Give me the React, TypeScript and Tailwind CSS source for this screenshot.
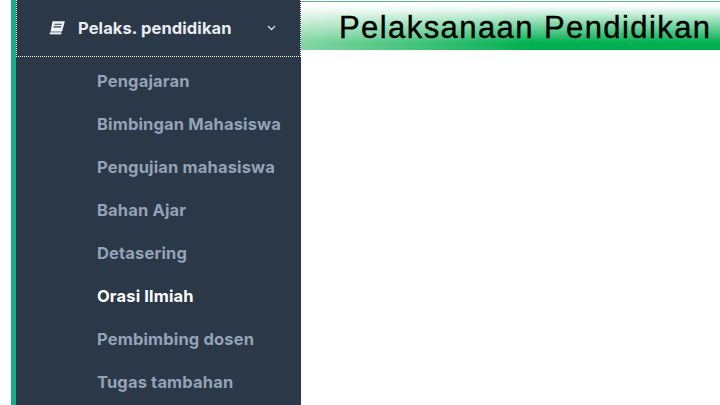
import React from 'react';

const items = [
  'Pengajaran',
  'Bimbingan Mahasiswa',
  'Pengujian mahasiswa',
  'Bahan Ajar',
  'Detasering',
  'Orasi Ilmiah',
  'Pembimbing dosen',
  'Tugas tambahan',
];

const App: React.FC = () => {
  return (
    <div className="flex h-[405px] w-[720px] overflow-hidden bg-white font-['Inter',sans-serif]">
      <div className="ml-[11px] h-full w-[5px] shrink-0 bg-[#1fa98a]" />
      <div className="h-full w-[285px] shrink-0 bg-[#2a3848]">
        <div className="flex h-[57px] items-center border-b border-r border-l border-dotted border-white pl-[31px] pr-[24px]">
          <svg className="h-[16px] w-[18px] shrink-0" viewBox="0 0 16 14" fill="none">
            <path d="M4 1h11l-2.6 9.5H2.2z" fill="#eef1f4" />
            <path d="M2.2 10.5h10.2l-.5 2.5H2.4c-1.4 0-1.6-1.7-.2-2.5z" fill="#eef1f4" stroke="#2a3848" strokeWidth="0.6" />
            <path d="M5.6 3.6h6.6M5 6h6.6" stroke="#2a3848" strokeWidth="0.9" />
          </svg>
          <span className="ml-[12px] text-[16.5px] leading-none font-bold tracking-[0.1px] whitespace-nowrap text-[#e9edf1]">Pelaks. pendidikan</span>
          <svg className="ml-auto h-[6px] w-[9px]" viewBox="0 0 9 6" fill="none">
            <path d="M1 1l3.5 3.5L8 1" stroke="#d5dae0" strokeWidth="1.3" />
          </svg>
        </div>
        <ul className="flex flex-col gap-[21px] pt-[13px] pl-[81px]">
          {items.map((item) => (
            <li
              key={item}
              className={
                item === 'Orasi Ilmiah'
                  ? 'text-[16.5px] leading-[22px] font-bold tracking-[0.15px] text-white'
                  : 'text-[16.5px] leading-[22px] font-bold tracking-[0.15px] text-[#95a2b7]'
              }
            >
              {item}
            </li>
          ))}
        </ul>
      </div>
      <div className="flex-1">
        <div className="mt-px h-px bg-[#5fb88c]" />
        <div className="relative h-[48px] bg-[linear-gradient(90deg,#84d6a4_0%,#00b050_55%,#00b050_100%)]">
          <div className="absolute inset-0 bg-[linear-gradient(180deg,#ffffff_0%,#ffffff_8%,rgba(255,255,255,0)_85%)]" />
          <h1 className="relative pl-[38px] font-['Liberation_Sans',sans-serif] text-[31px] leading-[52px] tracking-[1.42px] whitespace-nowrap text-black [-webkit-text-stroke:0.4px_#000]">
            Pelaksanaan Pendidikan
          </h1>
        </div>
      </div>
    </div>
  );
};

export default App;
